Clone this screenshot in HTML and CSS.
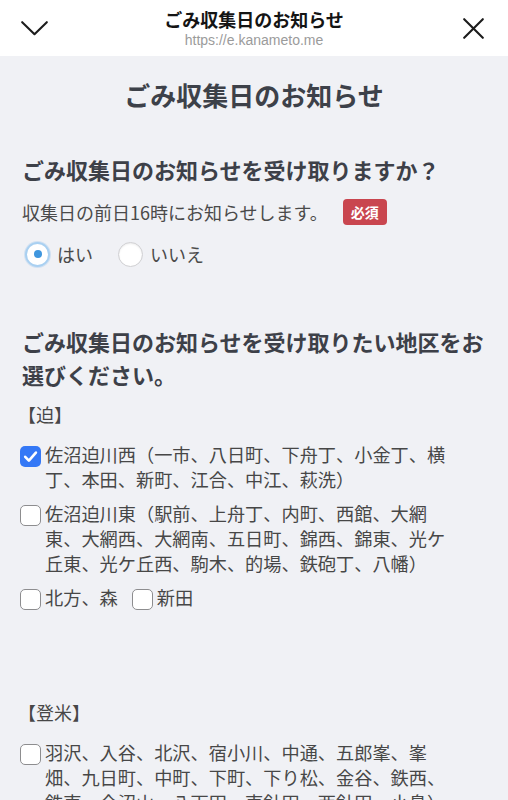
FILE: index.html
```html
<!DOCTYPE html>
<html lang="ja">
<head>
<meta charset="utf-8">
<meta name="viewport" content="width=device-width, initial-scale=1">
<title>ごみ収集日のお知らせ</title>
<link rel="stylesheet" href="styles.css">
</head>
<body>
<header class="topbar">
  <div class="bar-left">
    <svg class="chevron" width="27" height="15" viewBox="0 0 27 15" aria-hidden="true">
      <polyline points="1.2,1.2 13.5,13.2 25.8,1.2" fill="none" stroke="#1c1c1c" stroke-width="2.1" stroke-linecap="round" stroke-linejoin="round"/>
    </svg>
  </div>
  <div class="bar-titles">
    <div class="bar-title">ごみ収集日のお知らせ</div>
    <div class="bar-url">https://e.kanameto.me</div>
  </div>
  <div class="bar-right">
    <svg class="close" width="21" height="21" viewBox="0 0 21 21" aria-hidden="true">
      <path d="M1.2 1.2 L19.8 19.8 M19.8 1.2 L1.2 19.8" fill="none" stroke="#1c1c1c" stroke-width="2.1" stroke-linecap="round"/>
    </svg>
  </div>
</header>

<main class="page">
  <h1 class="page-title">ごみ収集日のお知らせ</h1>

  <section class="question">
    <h2 class="q-title">ごみ収集日のお知らせを受け取りますか？</h2>
    <div class="q-desc">
      <span>収集日の前日16時にお知らせします。</span>
      <span class="badge">必須</span>
    </div>
    <div class="radios">
      <label class="radio-opt">
        <span class="radio checked"><span class="dot"></span></span>
        <span class="opt-text">はい</span>
      </label>
      <label class="radio-opt">
        <span class="radio"></span>
        <span class="opt-text">いいえ</span>
      </label>
    </div>
  </section>

  <section class="question q-areas">
    <h2 class="q-title">ごみ収集日のお知らせを受け取りたい地区をお選びください。</h2>

    <div class="group">
      <div class="group-label">【迫】</div>
      <div class="options">
        <label class="check-opt">
          <span class="checkbox checked">
            <svg width="21" height="21" viewBox="0 0 21 21" aria-hidden="true"><path d="M5.2 10.8 L8.9 14.6 L15.9 6.6" fill="none" stroke="#fff" stroke-width="2.6" stroke-linecap="round" stroke-linejoin="round"/></svg>
          </span>
          <span class="check-text">佐沼迫川西（一市、八日町、下舟丁、小金丁、横丁、本田、新町、江合、中江、萩洗）</span>
        </label>
        <label class="check-opt">
          <span class="checkbox"></span>
          <span class="check-text">佐沼迫川東（駅前、上舟丁、内町、西館、大網東、大網西、大網南、五日町、錦西、錦東、光ケ丘東、光ケ丘西、駒木、的場、鉄砲丁、八幡）</span>
        </label>
        <label class="check-opt short">
          <span class="checkbox"></span>
          <span class="check-text">北方、森</span>
        </label>
        <label class="check-opt short">
          <span class="checkbox"></span>
          <span class="check-text">新田</span>
        </label>
      </div>
    </div>

    <div class="group">
      <div class="group-label">【登米】</div>
      <div class="options">
        <label class="check-opt">
          <span class="checkbox"></span>
          <span class="check-text">羽沢、入谷、北沢、宿小川、中通、五郎峯、峯畑、九日町、中町、下町、下り松、金谷、鉄西、鉄東、合沼山、八下田、東針田、西針田、小島）</span>
        </label>
      </div>
    </div>
  </section>
</main>
</body>
</html>
```

FILE: styles.css
```css
html, body {
  margin: 0;
  padding: 0;
}

body {
  background: #f0f1f5;
  font-family: "Noto Sans CJK JP", "Noto Sans", sans-serif;
  color: #464646;
}

/* top bar */
.topbar {
  height: 56px;
  background: #ffffff;
  display: grid;
  grid-template-columns: 70px 1fr 70px;
  align-items: center;
}

.bar-left {
  padding-left: 21px;
  display: flex;
  align-items: center;
}

.bar-right {
  padding-right: 24px;
  display: flex;
  justify-content: flex-end;
  align-items: center;
}

.chevron {
  display: block;
  margin-top: 1px;
}

.close {
  display: block;
  margin-top: 1px;
}

.bar-titles {
  display: flex;
  flex-direction: column;
  align-items: center;
  padding-top: 1px;
}

.bar-title {
  font-size: 18px;
  font-weight: 700;
  line-height: 22px;
  color: #141414;
}

.bar-url {
  font-family: "Liberation Sans", Arial, sans-serif;
  font-size: 14px;
  line-height: 18px;
  color: #9b9b9b;
  margin-top: 1px;
}

/* page */
.page {
  padding: 21px 22px 0;
}

.page-title {
  margin: 0;
  text-align: center;
  font-size: 26px;
  line-height: 36px;
  font-weight: 700;
  color: #3d4149;
}

.question {
  margin-top: 40px;
}

.q-title {
  margin: 0;
  font-size: 22px;
  line-height: 33px;
  font-weight: 700;
  color: #3d4048;
}

.q-desc {
  margin-top: 13px;
  display: flex;
  align-items: center;
  font-size: 18px;
  line-height: 26px;
  color: #4a4a4a;
}

.badge {
  margin-left: 15px;
  background: #c9464f;
  color: #ffffff;
  font-size: 14px;
  font-weight: 700;
  line-height: 26px;
  height: 26px;
  padding: 0 8px;
  border-radius: 4px;
}

.radios {
  margin-top: 16px;
  padding-left: 3px;
  display: flex;
  gap: 25px;
}

.radio-opt {
  display: inline-flex;
  align-items: center;
  gap: 7px;
  font-size: 18px;
  line-height: 26px;
  color: #4a4a4a;
}

.radio {
  width: 25px;
  height: 25px;
  box-sizing: border-box;
  border-radius: 50%;
  background: #ffffff;
  border: 1.5px solid #cfcfd2;
  box-shadow: inset 0 1px 2px rgba(0, 0, 0, 0.08);
  display: flex;
  align-items: center;
  justify-content: center;
}

.radio.checked {
  border: 2.5px solid #a9d0f1;
  box-shadow: 0 0 0 1px rgba(120, 180, 235, 0.25);
}

.radio .dot {
  width: 8px;
  height: 8px;
  border-radius: 50%;
  background: #3f96de;
}

/* areas */
.q-areas {
  margin-top: 58px;
}

.group {
  margin-top: 10px;
}

.group + .group {
  margin-top: 89px;
}

.group-label {
  font-size: 18px;
  line-height: 26px;
  color: #474747;
  margin-left: -4px;
}

.options {
  margin-top: 15px;
  margin-left: -2px;
  margin-right: 30px;
  display: flex;
  flex-wrap: wrap;
  column-gap: 14px;
  row-gap: 9px;
}

.check-opt {
  display: flex;
  align-items: flex-start;
  gap: 4px;
  width: 100%;
  font-size: 18.2px;
  line-height: 25px;
  color: #474747;
}

.check-opt.short {
  width: auto;
}

.check-text {
  flex: 1;
}

.checkbox {
  flex: none;
  width: 21px;
  height: 21px;
  box-sizing: border-box;
  margin-top: 4px;
  border-radius: 5px;
  background: #ffffff;
  border: 1.6px solid #8d8d8f;
  display: flex;
  align-items: center;
  justify-content: center;
}

.checkbox.checked {
  background: #3478f6;
  border: none;
}

.checkbox svg {
  display: block;
}
```
